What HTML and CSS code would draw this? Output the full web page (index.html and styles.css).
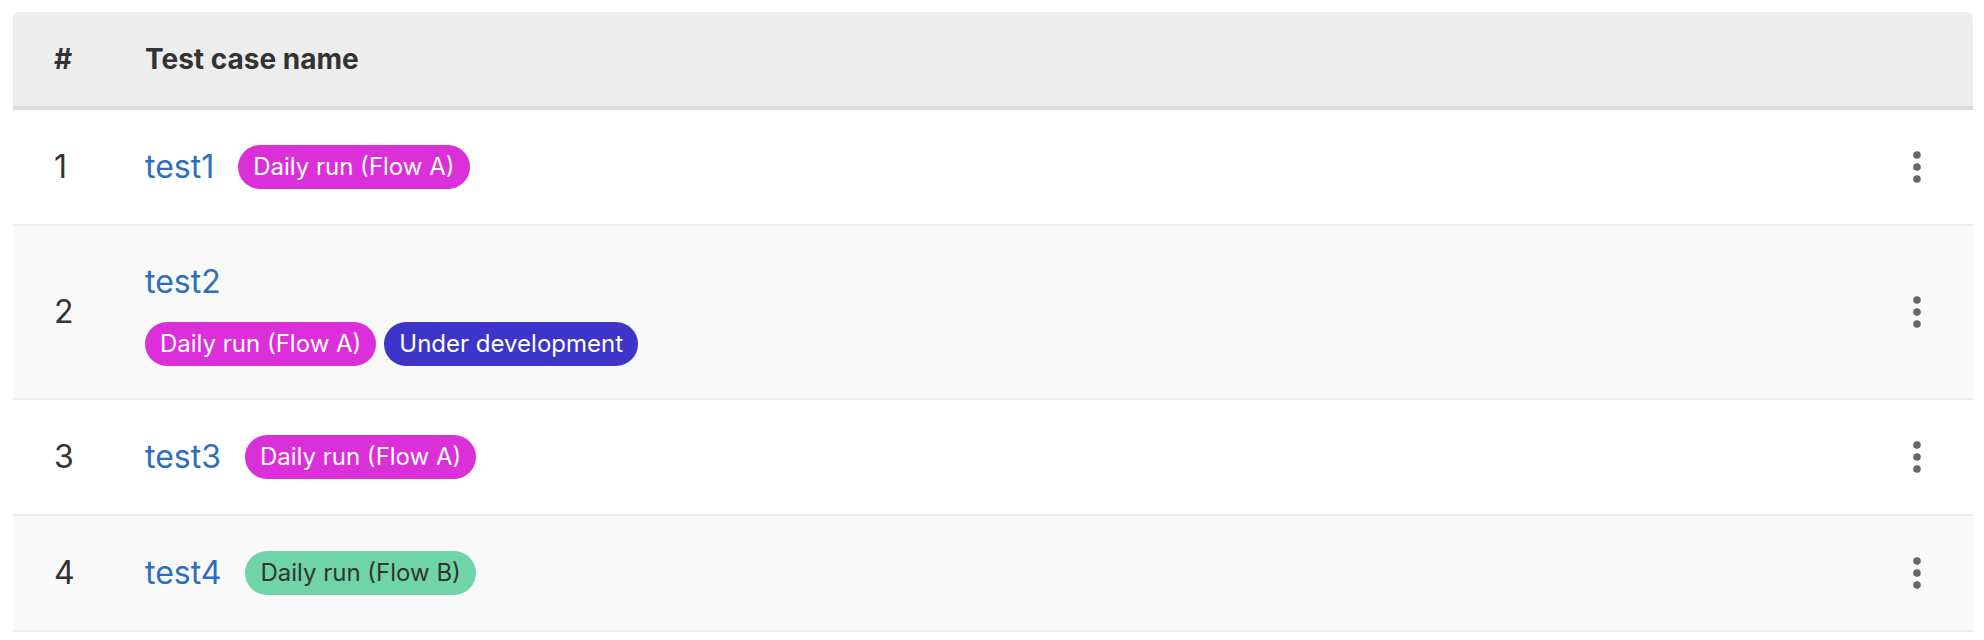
FILE: index.html
```html
<!DOCTYPE html>
<html lang="en">
<head>
<meta charset="utf-8">
<title>Test cases</title>
<link rel="stylesheet" href="styles.css">
</head>
<body>
<div class="page">
  <div class="table">
    <div class="head">
      <div class="col-num">#</div>
      <div class="col-name">Test case name</div>
      <div class="col-menu"></div>
    </div>

    <div class="row">
      <div class="col-num">1</div>
      <div class="col-name">
        <div class="name-line">
          <a class="link" href="#">test1</a>
          <span class="badge badge-pink">Daily run (Flow A)</span>
        </div>
      </div>
      <div class="col-menu">
        <svg class="kebab" width="8" height="32" viewBox="0 0 8 32"><circle cx="4" cy="4" r="3.8"/><circle cx="4" cy="16" r="3.8"/><circle cx="4" cy="28" r="3.8"/></svg>
      </div>
    </div>

    <div class="row row-alt row-stacked">
      <div class="col-num">2</div>
      <div class="col-name">
        <div class="name-line">
          <a class="link" href="#">test2</a>
        </div>
        <div class="badge-line">
          <span class="badge badge-pink">Daily run (Flow A)</span>
          <span class="badge badge-indigo">Under development</span>
        </div>
      </div>
      <div class="col-menu">
        <svg class="kebab" width="8" height="32" viewBox="0 0 8 32"><circle cx="4" cy="4" r="3.8"/><circle cx="4" cy="16" r="3.8"/><circle cx="4" cy="28" r="3.8"/></svg>
      </div>
    </div>

    <div class="row">
      <div class="col-num">3</div>
      <div class="col-name">
        <div class="name-line">
          <a class="link" href="#">test3</a>
          <span class="badge badge-pink">Daily run (Flow A)</span>
        </div>
      </div>
      <div class="col-menu">
        <svg class="kebab" width="8" height="32" viewBox="0 0 8 32"><circle cx="4" cy="4" r="3.8"/><circle cx="4" cy="16" r="3.8"/><circle cx="4" cy="28" r="3.8"/></svg>
      </div>
    </div>

    <div class="row row-alt">
      <div class="col-num">4</div>
      <div class="col-name">
        <div class="name-line">
          <a class="link" href="#">test4</a>
          <span class="badge badge-green">Daily run (Flow B)</span>
        </div>
      </div>
      <div class="col-menu">
        <svg class="kebab" width="8" height="32" viewBox="0 0 8 32"><circle cx="4" cy="4" r="3.8"/><circle cx="4" cy="16" r="3.8"/><circle cx="4" cy="28" r="3.8"/></svg>
      </div>
    </div>
  </div>
</div>
</body>
</html>
```

FILE: styles.css
```css
* { box-sizing: border-box; }

html, body {
  margin: 0;
  background: #ffffff;
}

body {
  font-family: Inter, "Noto Sans", "Liberation Sans", sans-serif;
  color: #333333;
}

.page {
  padding: 12px 11px 0 13px;
}

.table {
  width: 1960px;
}

.head,
.row {
  display: grid;
  grid-template-columns: 132px 1fr 112px;
  align-items: center;
}

.head {
  background: #ededed;
  border-bottom: 4px solid #dcdcdc;
  border-radius: 6px 6px 0 0;
  padding: 23px 0;
  font-size: 28px;
  line-height: 48px;
  font-weight: 700;
  color: #333333;
}

.row {
  background: #ffffff;
  border-bottom: 2px solid #ececec;
  padding: 32px 0;
  font-size: 32px;
  line-height: 48px;
}

.row-alt {
  background: #f9f9f9;
}

.col-num {
  padding-left: 41px;
}

.col-menu {
  display: flex;
  justify-content: center;
  align-items: center;
}

.name-line {
  display: flex;
  align-items: center;
  gap: 24px;
  min-height: 50px;
}

.row-stacked .name-line {
  min-height: 48px;
}

.badge-line {
  display: flex;
  gap: 8px;
  margin-top: 16px;
}

.link {
  color: #2e6ebf;
  text-decoration: none;
}

.badge {
  display: inline-flex;
  align-items: center;
  height: 44px;
  padding: 0 15px;
  border-radius: 22px;
  font-size: 24px;
  line-height: 44px;
  white-space: nowrap;
}

.badge-pink {
  background: #db2fd9;
  color: #ffffff;
}

.badge-indigo {
  background: #3c35c8;
  color: #ffffff;
}

.badge-green {
  background: #6fd5a8;
  color: #333333;
}

.kebab {
  display: block;
  fill: #666666;
}
```
